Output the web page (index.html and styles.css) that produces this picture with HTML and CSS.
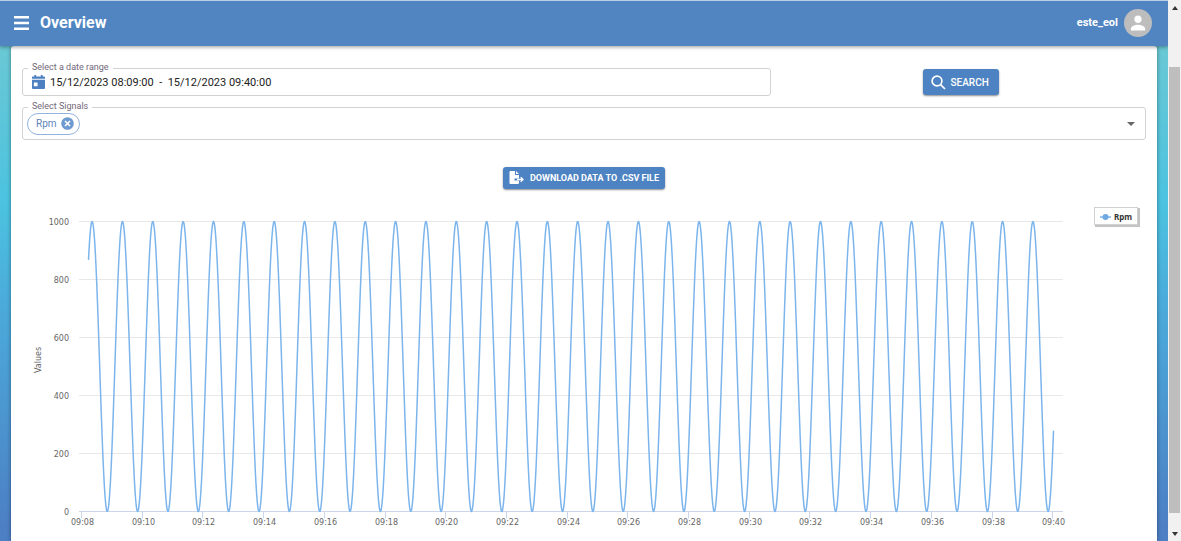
FILE: index.html
```html
<!DOCTYPE html>
<html lang="en">
<head>
<meta charset="utf-8">
<meta name="viewport" content="width=device-width, initial-scale=1">
<title>Overview</title>
<link rel="stylesheet" href="styles.css">
</head>
<body>
<div class="page">
  <header class="topbar">
    <button class="menu-btn" aria-label="Menu">
      <svg width="15" height="14" viewBox="0 0 15 14"><path d="M0 1.3h15M0 7h15M0 12.7h15" stroke="#fff" stroke-width="2.4"/></svg>
    </button>
    <h1 class="title">Overview</h1>
    <span class="user">este_eol</span>
    <button class="avatar" aria-label="Account">
      <svg width="20" height="20" viewBox="0 0 24 24"><path fill="#fff" d="M12 12c2.5 0 4.4-2 4.4-4.5S14.500 3 12 3 7.600 5 7.600 7.500 9.500 12 12 12zm0 2c-3 0-8.500 1.500-8.500 4.600V21h17v-2.400C20.500 15.500 15 14 12 14z"/></svg>
    </button>
  </header>
  <main class="card">
    <form class="filters">
      <div class="field date-field">
        <label class="field-label" for="range">Select a date range</label>
        <svg class="calendar" width="13" height="14" viewBox="0 0 14 15"><path fill="#4c80c0" fill-rule="evenodd" d="M2.500 0h2v1.500h5V0h2v1.500H13a1 1 0 0 1 1 1V4H0V2.500a1 1 0 0 1 1-1h1.500zM0 5h14v9a1 1 0 0 1-1 1H1a1 1 0 0 1-1-1zm2 3v4h4V8z"/></svg>
        <input class="range" id="range" type="text" value="15/12/2023 08:09:00  -  15/12/2023 09:40:00">
      </div>
      <div class="search-cell">
        <button class="btn search" type="button">
          <svg width="15" height="15" viewBox="0 0 15 15" fill="none" stroke="#fff" stroke-width="1.700"><circle cx="6" cy="6" r="4.900"/><path d="M9.600 9.600L14 14"/></svg>
          SEARCH
        </button>
      </div>
      <div class="field signal-field" role="group" aria-labelledby="signals">
        <span class="field-label" id="signals">Select Signals</span>
        <span class="chip">Rpm
          <button class="chip-remove" type="button" aria-label="Remove Rpm">
            <svg width="13" height="13" viewBox="0 0 13 13"><circle cx="6.500" cy="6.500" r="6.300" fill="#6d9bd0"/><path d="M4 4l5 5M9 4l-5 5" stroke="#fff" stroke-width="1.600"/></svg>
          </button>
        </span>
        <button class="open" type="button" aria-label="Open">
          <svg width="8" height="4" viewBox="0 0 8 4"><path d="M0 0h8L4 4z" fill="#666"/></svg>
        </button>
      </div>
    </form>
    <button class="btn download" type="button">
      <svg width="15" height="14" viewBox="0 0 15 14"><path fill="#fff" d="M1.500 0H6v4h4v3.500H5.500v2H10V12a1 1 0 0 1-1 1H1.500a1 1 0 0 1-1-1V1a1 1 0 0 1 1-1zM7 0l3 3H7z"/><path d="M8 8.500h6M11.700 6.200L14 8.500l-2.300 2.300" fill="none" stroke="#fff" stroke-width="1.300"/></svg>
      DOWNLOAD DATA TO .CSV FILE
    </button>
    <svg class="chart" id="chart" viewBox="0 0 1124 341" role="img" aria-label="Rpm values over time"></svg>
  </main>
</div>
<div class="scrollbar" aria-hidden="true">
  <svg class="arrow" width="6" height="4" viewBox="0 0 6 4"><path d="M0 4h6L3 0z" fill="#333"/></svg>
  <div class="track"><div class="thumb"></div></div>
  <svg class="arrow" width="6" height="4" viewBox="0 0 6 4"><path d="M0 0h6L3 4z" fill="#333"/></svg>
</div>
<script src="chart.js"></script>
</body>
</html>
```
FILE: styles.css
```css
* { box-sizing: border-box; }

body {
  margin: 0;
  height: 100vh;
  display: flex;
  overflow: hidden;
  font-family: Roboto, "Liberation Sans", sans-serif;
  color: #222;
}

button {
  font: inherit;
  border: 0;
  padding: 0;
  background: none;
  display: flex;
  align-items: center;
  justify-content: center;
}

.page {
  flex: 1;
  min-width: 0;
  display: flex;
  flex-direction: column;
  overflow: hidden;
  background: linear-gradient(#6ac8d4 46px, #4cc3e0 200px, #4bacdb 300px, #4c7fc4 530px);
}

.topbar {
  flex: none;
  height: 46px;
  padding: 0 16px 2px 14px;
  display: flex;
  align-items: center;
  border-top: 1px solid #b9cfe8;
  background: #5085c2;
  color: #fff;
  box-shadow: 0 1px 4px rgba(0, 0, 0, .4);
  z-index: 1;
}

.title {
  flex: 1;
  margin: 0 0 0 11px;
  font-size: 16px;
  line-height: 20px;
  font-weight: 700;
}

.user {
  font-size: 11px;
  font-weight: 700;
  margin-right: 6px;
}

.avatar {
  width: 28px;
  height: 28px;
  border-radius: 50%;
  background: #bdbdbd;
}

.card {
  flex: 1 0 auto;
  margin: 0 11px;
  padding: 22px 11px 0;
  background: #fff;
  border-radius: 3px 3px 0 0;
  box-shadow: 0 0 4px rgba(0, 0, 0, .4);
}

.filters {
  display: grid;
  grid-template-columns: 2fr 1fr;
  row-gap: 11px;
}

.field {
  position: relative;
  display: flex;
  align-items: center;
  border: 1px solid #d2d2d2;
  border-radius: 3px;
}

.date-field {
  height: 28px;
  padding: 0 9px;
}

.signal-field {
  grid-column: 1 / -1;
  height: 33px;
  padding: 0 9px 0 4px;
  justify-content: space-between;
}

.field-label {
  position: absolute;
  top: -8px;
  left: 5px;
  padding: 0 4px;
  background: #fff;
  color: #72687a;
  font-size: 9px;
  line-height: 12px;
}

.range {
  flex: 1;
  border: 0;
  padding: 1px 0 0;
  margin-left: 5px;
  outline: 0;
  background: none;
  font: 11px/16px Roboto, sans-serif;
  color: #222;
}

.search-cell {
  display: flex;
  align-items: center;
  justify-content: center;
  padding-left: 4px;
}

.btn {
  color: #fff;
  background: #4d83c2;
  border-radius: 3px;
  box-shadow: 0 1px 2px rgba(0, 0, 0, .45);
  white-space: nowrap;
}

.search {
  height: 26px;
  padding: 0 10px 0 8px;
  gap: 5px;
  font-size: 10px;
  font-weight: 500;
}

.download {
  height: 22px;
  margin: 27px auto 11px;
  padding: 0 6px;
  gap: 6px;
  font-size: 9px;
  font-weight: 700;
}

.chip {
  height: 22px;
  padding: 0 5px 0 8px;
  display: flex;
  align-items: center;
  gap: 4px;
  border: 1px solid #93b4dc;
  border-radius: 11px;
  color: #5c83b8;
  font-size: 10px;
}

.open { width: 10px; height: 20px; }

.chart {
  display: block;
  width: 100%;
  height: auto;
  font-family: "DejaVu Sans", sans-serif;
  font-size: 8px;
  fill: #666;
}

.grid-line { stroke: #e8e8e8; }
.axis-line { stroke: #ccd6eb; }
.series { fill: none; stroke: #7cb5ec; stroke-width: 1.5; stroke-linejoin: round; }
.label-x, .label-values { text-anchor: middle; }
.label-y { text-anchor: end; }
.legend-shadow { fill: #c4c4c4; }
.legend-box { fill: #fff; stroke: #d0d0d0; }
.legend-text { font-family: "Noto Sans", sans-serif; font-weight: 700; fill: #333; }
.legend-dot { fill: #6fa9e2; }

.scrollbar {
  flex: none;
  width: 13px;
  padding: 6px 0 5px;
  display: flex;
  flex-direction: column;
  align-items: center;
  background: #f1f1f1;
}

.arrow { flex: none; }

.track {
  flex: 1;
  width: 11px;
  padding: 57px 0 19px;
}

.thumb {
  height: 100%;
  background: #bebebe;
}
```
FILE: chart.js
```javascript
const chart = document.getElementById("chart");

function add(name, attrs, text) {
  const el = document.createElementNS("http://www.w3.org/2000/svg", name);
  for (const key in attrs) el.setAttribute(key, attrs[key]);
  if (text !== undefined) el.textContent = text;
  chart.append(el);
}

const left = 57, right = 1041, base = 311.5, height = 290;
const firstTick = 60, minute = 30.35;
const yOf = value => base - value / 1000 * height;

for (let v = 0; v <= 1000; v += 200) {
  const y = Math.round(yOf(v)) - 0.5;
  add("path", { class: v ? "grid-line" : "axis-line", d: `M${left} ${y}H${right}` });
  add("text", { class: "label-y", x: 47, y: y + 3 }, v);
}

for (let m = 8; m <= 40; m += 2) {
  const x = Math.round(firstTick + (m - 8) * minute);
  add("path", { class: "axis-line", d: `M${x - 0.5} ${base}v7` });
  add("text", { class: "label-x", x: x + 0.5, y: 325 }, "09:" + String(m).padStart(2, "0"));
}

add("text", { class: "label-values", transform: "translate(19 160) rotate(-90)" }, "Values");

// One-minute sine wave between 0 and 1000 rpm
const points = [];
for (let x = 66.5; x <= 1031.5; x += 0.5) {
  const value = 500 + 500 * Math.cos((x - 70.1) / minute * 2 * Math.PI);
  points.push(x + " " + yOf(value).toFixed(1));
}
add("path", { class: "series", d: "M" + points.join("L") });

add("rect", { class: "legend-shadow", x: 1073, y: 8, width: 45, height: 19 });
add("rect", { class: "legend-box", x: 1072.5, y: 7.5, width: 43, height: 17 });
add("path", { class: "series", d: "M1078 17h11" });
add("circle", { class: "legend-dot", cx: 1083.5, cy: 17, r: 3 });
add("text", { class: "legend-text", x: 1092, y: 20 }, "Rpm");
```
